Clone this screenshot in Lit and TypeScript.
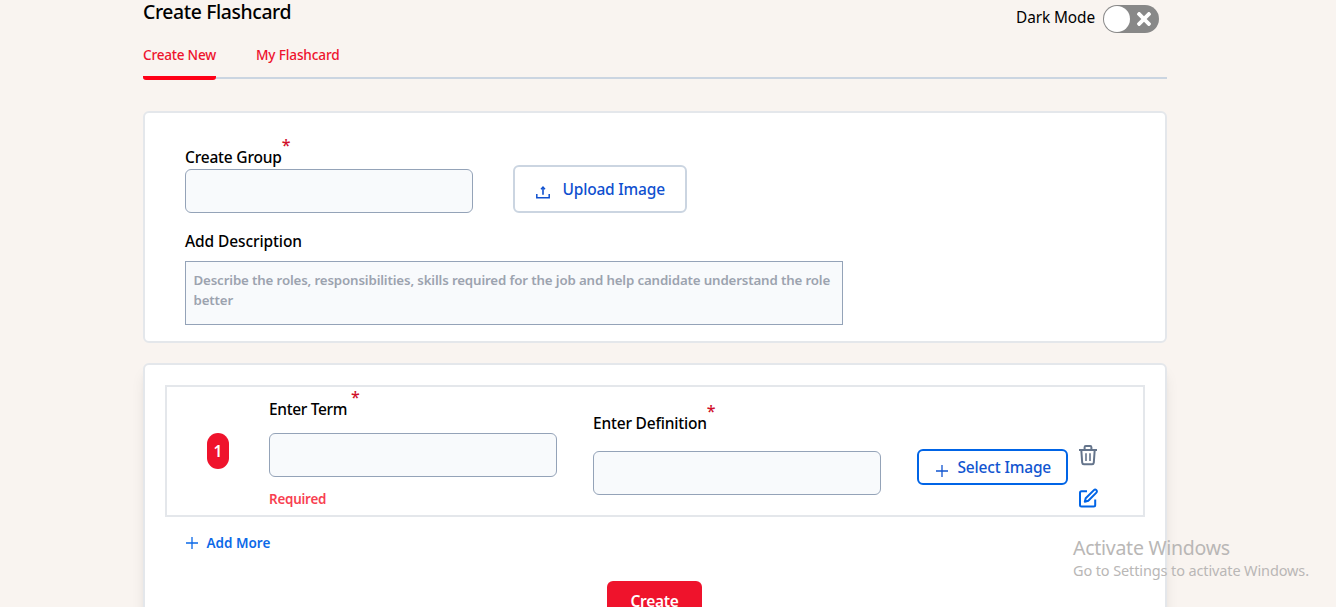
import { LitElement, html, css, svg } from "lit";
import { customElement } from "lit/decorators.js";

const closeIcon = svg`<svg class="x" viewBox="0 80 352 352" fill="currentColor"><path d="M242.72 256l100.07-100.07c12.28-12.28 12.28-32.19 0-44.48l-22.24-22.24c-12.28-12.28-32.19-12.28-44.48 0L176 189.28 75.93 89.21c-12.28-12.28-32.19-12.28-44.48 0L9.21 111.45c-12.28 12.28-12.28 32.19 0 44.48L109.28 256 9.21 356.07c-12.28 12.28-12.28 32.19 0 44.48l22.24 22.24c12.28 12.28 32.2 12.28 44.48 0L176 322.72l100.07 100.07c12.28 12.28 32.2 12.28 44.48 0l22.24-22.24c12.28-12.28 12.28-32.19 0-44.48L242.72 256z"/></svg>`;
const uploadIcon = svg`<svg width="14" height="13" viewBox="0 0 14 13" fill="none" stroke="currentColor"><path d="M.8 8v3.7h12.4V8" stroke-width="1.5"/><path d="M7 8.7V1.4" stroke-width="1.6"/><path d="M5 3.2L7 1.1l2 2.1" stroke-width="1.4"/></svg>`;
const plusIcon = svg`<svg width="12" height="12" viewBox="0 0 12 12" fill="none" stroke="currentColor" stroke-width="1.3"><path d="M6 0v12M0 6h12"/></svg>`;
const trashIcon = svg`<svg width="20" height="21" viewBox="0 0 20 21" fill="none" stroke="currentColor"><path d="M1 5h18" stroke-width="2"/><path d="M6.600 5V2.200c0-.7.4-1.200 1.200-1.200h4.400c.8 0 1.200.5 1.200 1.200V5" stroke-width="2"/><path d="M3.300 5l.9 12.700c.1 1 .7 1.600 1.700 1.600h8.200c1 0 1.600-.6 1.700-1.600L16.700 5" stroke-width="2"/><path d="M8 8.300v7.800M12 8.300v7.800" stroke-width="1.600"/></svg>`;
const editIcon = svg`<svg width="20" height="20" viewBox="0 0 20 20" fill="none" stroke="currentColor" stroke-width="2" stroke-linejoin="round"><path d="M9 3.300H3.500A1.500 1.500 0 0 0 2 4.800v12.200a1.500 1.500 0 0 0 1.500 1.500h12.200a1.500 1.500 0 0 0 1.500-1.500V11.500"/><path d="M15.900 2.100a1.700 1.700 0 0 1 2.500 2.500L10.300 12.800l-3.500 1 .9-3.500z"/></svg>`;

@customElement("app-root")
export class AppRoot extends LitElement {
  static styles = css`
    :host { display: block; height: 607px; overflow: hidden; position: relative; background: #f9f4f0; color: #000; font: 500 15.5px/24px "Noto Sans", "Open Sans", sans-serif; }
    * { box-sizing: border-box; }
    svg { display: block; flex: none; }
    .page { width: 1024px; margin-left: 143px; }
    .head { display: flex; justify-content: space-between; height: 45px; }
    h1 { margin: 0; font-size: 19.4px; line-height: 24px; font-weight: 500; letter-spacing: -.4px; }
    .mode { display: flex; align-items: flex-start; padding: 5px 8px 0 0; gap: 8px; font-size: 15.4px; letter-spacing: -.1px; line-height: 25px; font-weight: 400; }
    .toggle { width: 56px; height: 28px; border-radius: 14px; background: #888; display: flex; align-items: center; padding: 0 8px 0 1px; justify-content: space-between; color: #fff; }
    .knob { width: 26px; height: 26px; border-radius: 50%; background: #fff; }
    .x { width: 14px; height: 14px; }
    .tabs { display: flex; gap: 40px; height: 34px; border-bottom: 2px solid #cbd5e1; font-size: 13.6px; line-height: 20px; color: #ee122d; }
    .tab { letter-spacing: -.15px; white-space: nowrap; }
    .tab.on { width: 73px; height: 35px; letter-spacing: -.23px; border-bottom: 4px solid #ff0016; border-radius: 0 0 3px 3px; }
    .card { background: #fff; border: 2px solid #e4e7eb; border-radius: 6px; }
    .group { margin-top: 32px; height: 232px; padding: 32px 40px 0; }
    .top { display: flex; gap: 40px; }
    .label { display: flex; align-items: flex-start; white-space: nowrap; height: 24px; }
    .star { color: #d0112b; font-size: 16px; margin-top: -12px; }
    .field { width: 288px; }
    .input { height: 44px; border: 1px solid #94a3b8; border-radius: 6px; background: #f8fafc; }
    .upload { margin-top: 20px; width: 174px; height: 48px; border: 2px solid #cbd5e1; border-radius: 6px; display: flex; align-items: center; padding-left: 21px; gap: 12.5px; letter-spacing: -.2px; color: #0f50cf; white-space: nowrap; }
    .upload svg { margin-top: 7px; }
    .desc { margin-top: 16px; letter-spacing: -.1px; }
    .area { margin-top: 8px; width: 658px; height: 64px; border: 1px solid #94a3b8; background: #f8fafc; padding: 8px 7.5px; font-size: 13.3px; line-height: 20px; font-weight: 600; letter-spacing: -.148px; color: #9ca3af; }
    .cards { margin-top: 20px; height: 300px; padding: 20px; box-shadow: 0 10px 15px -3px rgba(0,0,0,.1), 0 4px 6px -4px rgba(0,0,0,.1); }
    .row { height: 132px; border: 2px solid #e4e7eb; display: flex; align-items: flex-start; padding-left: 40px; }
    .badge { margin: 46px 40px 0 0; width: 22px; height: 36px; border-radius: 11px; background: #ef132c; color: #fff; font-size: 15.5px; font-weight: 600; line-height: 36px; text-align: center; }
    .term { padding-top: 10px; margin-right: 36px; }
    .term .input { margin-top: 12px; }
    .term .star { margin: -12px 0 0 4px; }
    .req { margin-top: 12px; font-size: 13.4px; line-height: 20px; font-weight: 600; letter-spacing: -.22px; color: #f83f51; }
    .def { padding-top: 24px; margin-right: 36px; }
    .def .input { margin-top: 16px; }
    .select { margin: 62px 10px 0 0; width: 151px; height: 36px; border: 2px solid #0064e6; border-radius: 6px; display: flex; align-items: center; gap: 9.5px; padding-left: 17px; color: #1155d0; letter-spacing: -.17px; white-space: nowrap; }
    .select svg { margin-top: 7px; }
    .acts { margin-top: 58px; display: flex; flex-direction: column; gap: 22px; }
    .trash { color: #64748b; }
    .edit { color: #0064e6; }
    .more { margin: 16px 0 0 21px; display: flex; align-items: center; gap: 8.5px; font-size: 13.5px; line-height: 20px; font-weight: 600; color: #0b69e8; }
    .create { margin: 28px 0 0 442px; width: 95px; height: 40px; border-radius: 6px; background: #ef132c; color: #fff; font-weight: 600; line-height: 41px; text-align: center; letter-spacing: -.3px; }
    .mark { position: absolute; left: 1073px; top: 536px; color: #b9b7b6; font-weight: 400; white-space: nowrap; }
    .m1 { font-size: 19.5px; line-height: 24px; letter-spacing: -.27px; }
    .m2 { font-size: 14.5px; line-height: 20px; letter-spacing: -.12px; }
    .t1 { letter-spacing: -.2px; }
    .t2 { letter-spacing: -.35px; }
  `;

  label(text: string, cls: string) {
    return html`<div class="label"><span class=${cls}>${text}</span><span class="star">*</span></div>`;
  }

  render() {
    return html`
      <div class="page">
        <div class="head">
          <h1>Create Flashcard</h1>
          <div class="mode"><span>Dark Mode</span><div class="toggle"><div class="knob"></div>${closeIcon}</div></div>
        </div>
        <div class="tabs"><div class="tab on">Create New</div><div class="tab">My Flashcard</div></div>
        <div class="card group">
          <div class="top">
            <div class="field">${this.label("Create Group", "t1")}<div class="input"></div></div>
            <div class="upload">${uploadIcon}<span>Upload Image</span></div>
          </div>
          <div class="desc">Add Description</div>
          <div class="area">Describe the roles, responsibilities, skills required for the job and help candidate understand the role better</div>
        </div>
        <div class="card cards">
          <div class="row">
            <div class="badge">1</div>
            <div class="field term">${this.label("Enter Term", "t2")}<div class="input"></div><div class="req">Required</div></div>
            <div class="field def">${this.label("Enter Definition", "t1")}<div class="input"></div></div>
            <div class="select">${plusIcon}<span>Select Image</span></div>
            <div class="acts"><div class="trash">${trashIcon}</div><div class="edit">${editIcon}</div></div>
          </div>
          <div class="more">${plusIcon}<span>Add More</span></div>
          <div class="create">Create</div>
        </div>
      </div>
      <div class="mark"><div class="m1">Activate Windows</div><div class="m2">Go to Settings to activate Windows.</div></div>
    `;
  }
}
